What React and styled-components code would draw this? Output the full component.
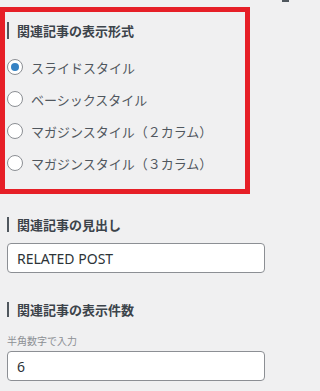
import styled, { createGlobalStyle } from "styled-components"

const GlobalStyle = createGlobalStyle`
    html, body {
        margin: 0;
        padding: 0;
        background: #f0f0f1;
    }
    body {
        font-family: "Noto Sans", "Noto Sans CJK JP", sans-serif;
        color: #3c434a;
    }
`;

const Page = styled.div`
    position: relative;
    width: 291px;
    height: 391px;
    padding-top: 7px;
    box-sizing: border-box;
    overflow: hidden;
`;

const ScrollMark = styled.div`
    position: absolute;
    top: 0;
    left: 282px;
    width: 7px;
    height: 2px;
    background: #50575e;
`;

const Highlight = styled.div`
    width: 250px;
    box-sizing: border-box;
    border: 5px solid #e61f27;
    padding: 10px 0 10px 2px;
`;

const Section = styled.div`
    padding-left: 7px;
    margin-top: ${({ $top }) => $top}px;
`;

const Heading = styled.div`
    display: flex;
    align-items: center;
    height: 17px;
    font-size: 13px;
    font-weight: 600;
    color: #3c434a;
    white-space: nowrap;
    &::before {
        content: "";
        width: 2px;
        height: ${({ $bar }) => $bar || 17}px;
        background: #50575e;
        margin-right: 8px;
    }
`;

const RadioList = styled.div`
    display: flex;
    flex-direction: column;
    margin-top: 12px;
`;

const RadioRow = styled.label`
    display: flex;
    align-items: center;
    height: 32px;
    gap: 8px;
    font-size: 13px;
    color: #50575e;
    white-space: nowrap;
`;

const RadioCircle = styled.span`
    width: 16px;
    height: 16px;
    box-sizing: border-box;
    border-radius: 50%;
    border: 1px solid #8c8f94;
    background: #fff;
    display: flex;
    align-items: center;
    justify-content: center;
    flex-shrink: 0;
    &::after {
        content: "";
        display: ${({ $checked }) => ($checked ? "block" : "none")};
        width: 8px;
        height: 8px;
        border-radius: 50%;
        background: #3582c4;
    }
`;

const Input = styled.div`
    width: 258px;
    height: 30px;
    box-sizing: border-box;
    margin-top: ${({ $top }) => $top}px;
    border: 1px solid #8c8f94;
    border-radius: 4px;
    background: #fff;
    padding: 0 9px;
    display: flex;
    align-items: center;
    font-size: 14px;
    color: #2c3338;
`;

const Hint = styled.div`
    margin-top: 16px;
    font-size: 10px;
    line-height: 14px;
    color: #8c8f94;
`;

const options = [
    { label: "スライドスタイル", checked: true },
    { label: "ベーシックスタイル" },
    { label: "マガジンスタイル（２カラム）" },
    { label: "マガジンスタイル（３カラム）" },
];

const App = () => {
    return (
        <Page>
            <GlobalStyle />
            <ScrollMark />
            <Highlight>
                <Heading>関連記事の表示形式</Heading>
                <RadioList>
                    {options.map((o) => (
                        <RadioRow key={o.label}>
                            <RadioCircle $checked={o.checked} />
                            {o.label}
                        </RadioRow>
                    ))}
                </RadioList>
            </Highlight>
            <Section $top={22}>
                <Heading $bar={15}>関連記事の見出し</Heading>
                <Input $top={10}>RELATED POST</Input>
            </Section>
            <Section $top={28}>
                <Heading $bar={15}>関連記事の表示件数</Heading>
                <Hint>半角数字で入力</Hint>
                <Input $top={3}>6</Input>
            </Section>
        </Page>
    )
}

export default App
